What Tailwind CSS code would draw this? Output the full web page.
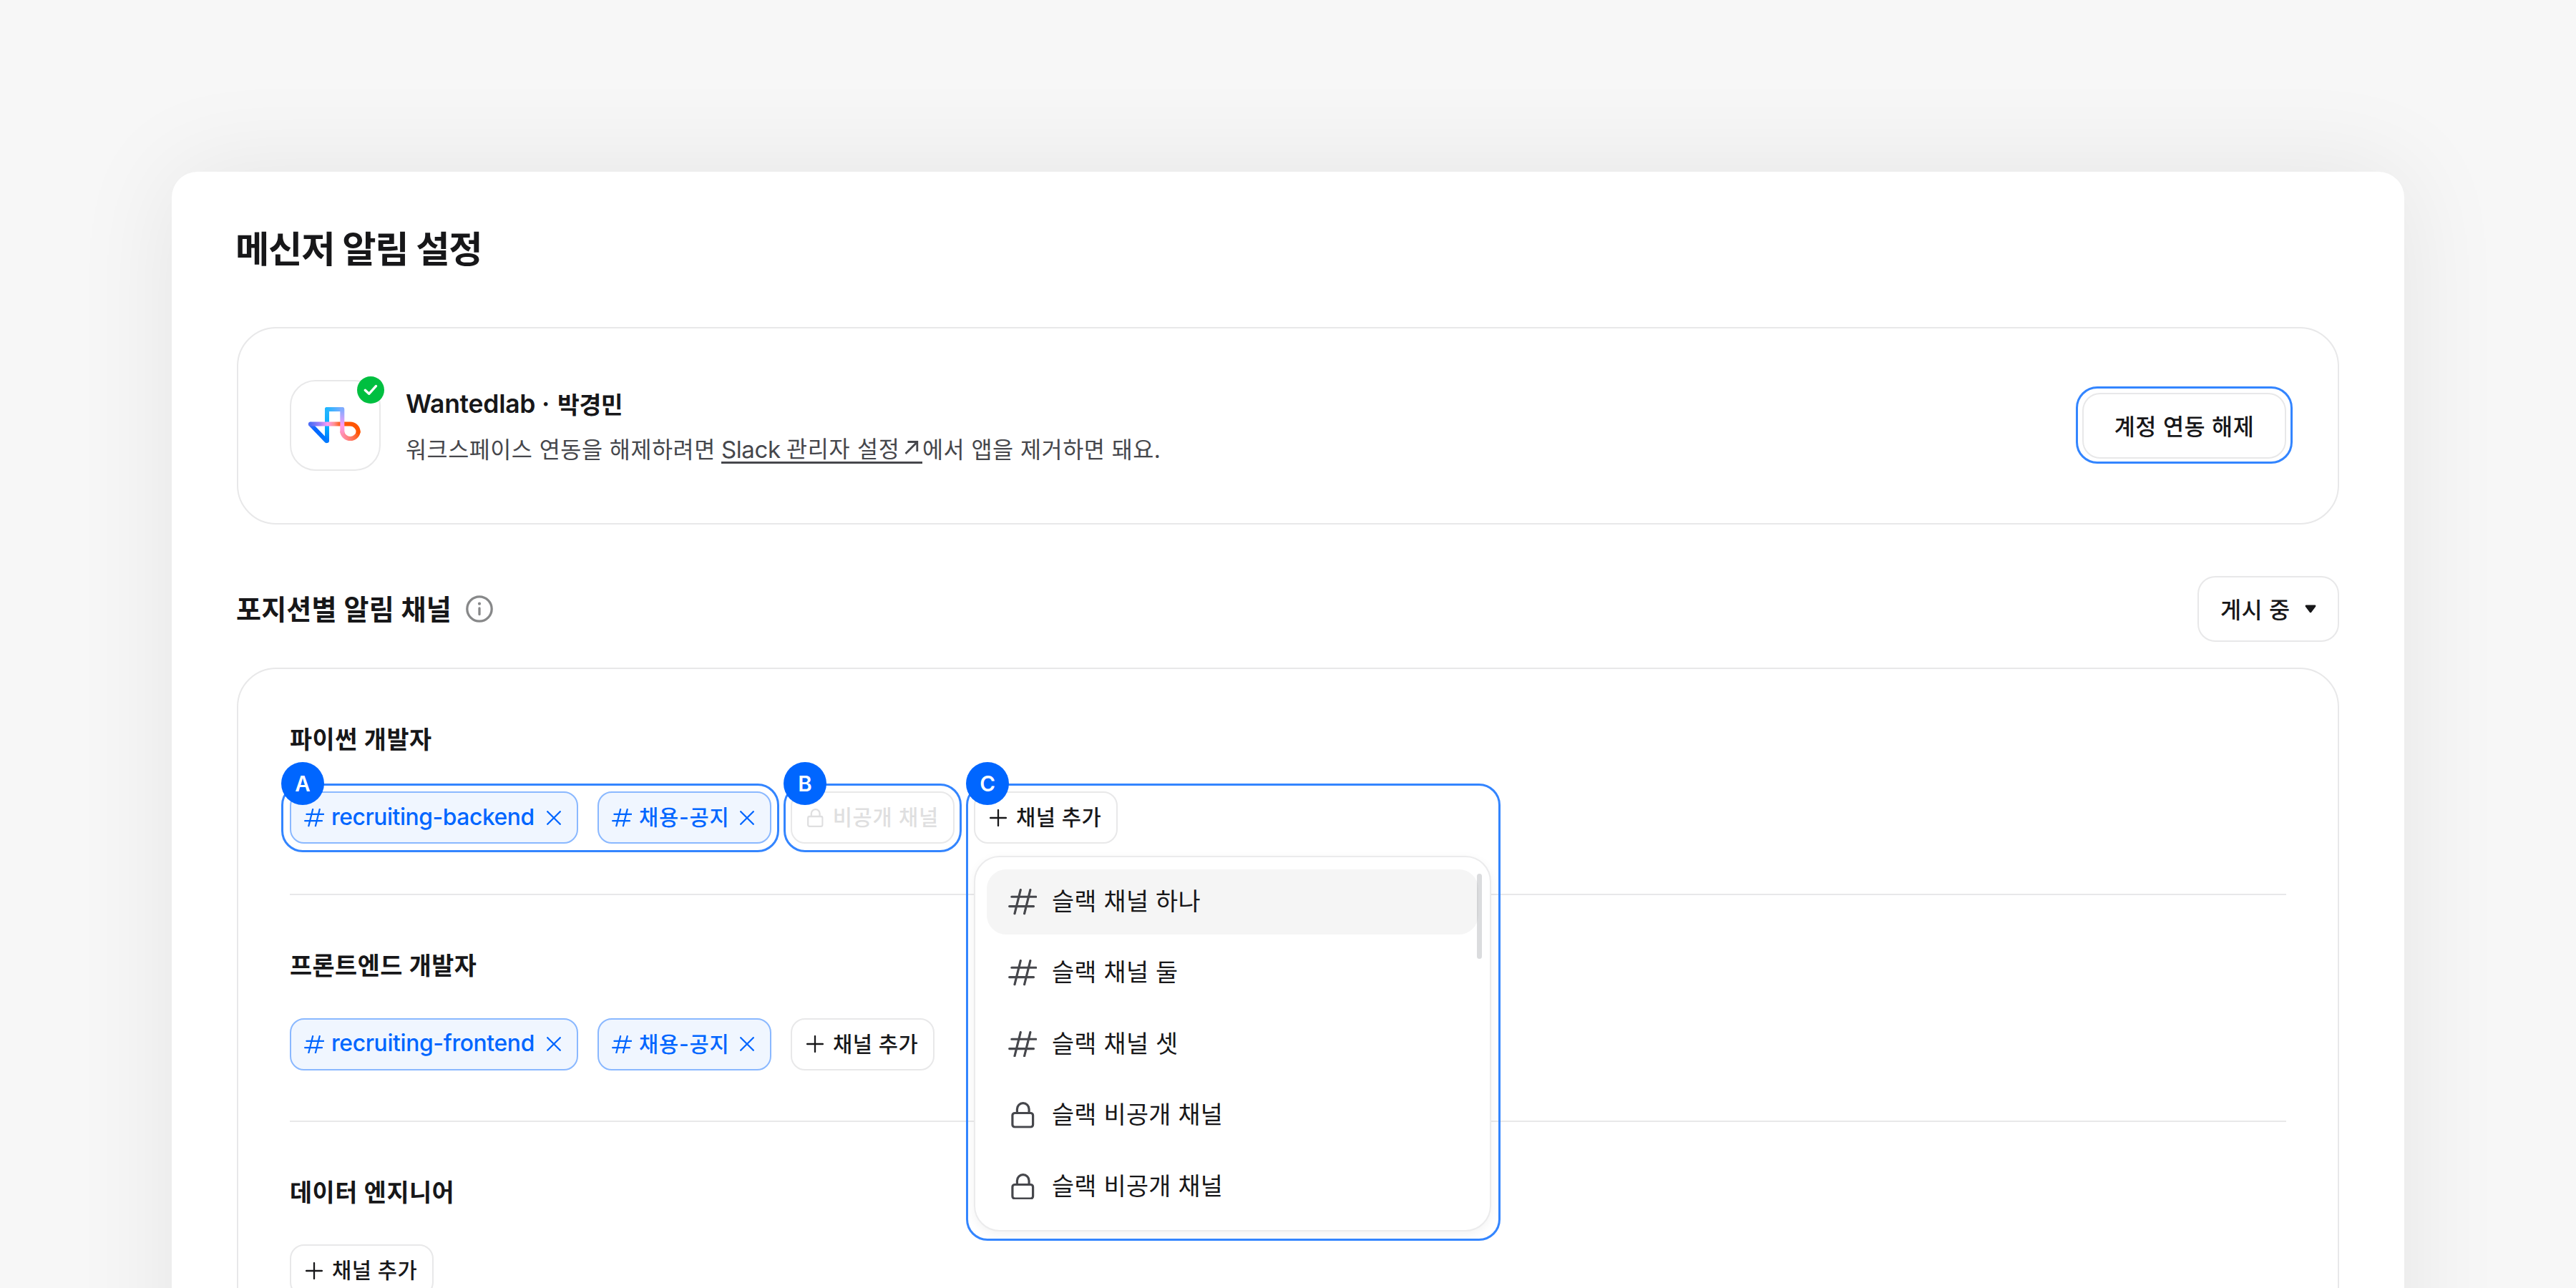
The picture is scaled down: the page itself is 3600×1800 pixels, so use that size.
<!DOCTYPE html>
<html lang="ko">
<head>
  <meta charset="UTF-8" />
  <meta name="viewport" content="width=device-width, initial-scale=1.0" />
  <title>메신저 알림 설정</title>
  <script src="https://cdn.jsdelivr.net/npm/@tailwindcss/browser@4"></script>
</head>
<body class="bg-[#f7f7f7] font-['Inter','Noto_Sans_CJK_KR',sans-serif] text-[#171719]">
  <!-- Shared icons -->
  <svg class="hidden">
    <symbol id="hash" viewBox="57 65 122 109">
      <path d="M71.5 98.5H174M62 138.5H164M109 69.5L84 169.5M150 69.5L125 169.5" fill="none" stroke="currentColor" stroke-width="9.6" stroke-linecap="round" />
    </symbol>
    <symbol id="lock" viewBox="69 960 96 110">
      <rect x="74" y="1006.5" width="86" height="58.5" rx="10" fill="none" stroke="currentColor" stroke-width="9.6" />
      <path d="M93.5 1006V989.8a25 25 0 0 1 50 0V1006" fill="none" stroke="currentColor" stroke-width="9.6" />
    </symbol>
    <symbol id="close" viewBox="0 0 20 20">
      <path d="M1.2 1.2L18.8 18.8M18.8 1.2L1.2 18.8" fill="none" stroke="currentColor" stroke-width="2.3" stroke-linecap="round" />
    </symbol>
    <symbol id="plus" viewBox="0 0 24 24">
      <path d="M12 1.1V22.9M1.1 12H22.9" fill="none" stroke="currentColor" stroke-width="2.3" stroke-linecap="round" />
    </symbol>
  </svg>

  <div class="h-[1800px] w-[3600px] overflow-hidden pt-[240px] pl-[240px]">
    <main class="h-[1800px] w-[3120px] rounded-[36px] bg-white px-[91px] pt-[71px] shadow-[0_0_145px_rgba(0,0,0,0.08)]">
      <h1 class="-ml-[2px] h-[72px] pt-[1px] text-[51.5px] leading-[72px] font-bold tracking-[-1.3px] whitespace-nowrap">메신저 알림 설정</h1>

      <!-- Connected account -->
      <section class="mt-[74px] flex h-[276px] items-center rounded-[55px] border-2 border-[#e8e8e9] px-[72px]">
        <div class="relative -mt-[1px] size-[127px] shrink-0 rounded-[36px] border-2 border-[#e8e8e9]">
          <svg class="absolute -top-[2px] -left-[2px] size-[127px]" viewBox="15 93 381 381" fill="none" stroke-width="18" stroke-linecap="round" stroke-linejoin="round">
            <defs>
              <linearGradient id="g1" gradientUnits="userSpaceOnUse" x1="171" y1="348" x2="171" y2="216">
                <stop offset="0" stop-color="#0078ff" /><stop offset=".45" stop-color="#00aeff" /><stop offset="1" stop-color="#29b6ff" />
              </linearGradient>
              <linearGradient id="g2" gradientUnits="userSpaceOnUse" x1="102" y1="277" x2="168" y2="348">
                <stop offset="0" stop-color="#3f6cf8" /><stop offset=".35" stop-color="#0066ff" /><stop offset="1" stop-color="#007aff" />
              </linearGradient>
              <linearGradient id="g3" gradientUnits="userSpaceOnUse" x1="102" y1="0" x2="240" y2="0">
                <stop offset="0" stop-color="#4f6cf6" /><stop offset=".3" stop-color="#a582f8" /><stop offset=".52" stop-color="#ff9cf2" /><stop offset=".72" stop-color="#ff8f8f" /><stop offset=".9" stop-color="#ff5a14" /><stop offset="1" stop-color="#ff5500" />
              </linearGradient>
              <linearGradient id="g4" gradientUnits="userSpaceOnUse" x1="171" y1="0" x2="235" y2="0">
                <stop offset="0" stop-color="#1fb6ff" /><stop offset="1" stop-color="#7fabff" />
              </linearGradient>
              <linearGradient id="g5" gradientUnits="userSpaceOnUse" x1="0" y1="216" x2="0" y2="320">
                <stop offset="0" stop-color="#7fabff" /><stop offset=".5" stop-color="#dd9ffa" /><stop offset=".65" stop-color="#ff9cf2" /><stop offset="1" stop-color="#ff8fb0" />
              </linearGradient>
              <linearGradient id="g6" gradientUnits="userSpaceOnUse" x1="235" y1="320" x2="302" y2="311">
                <stop offset="0" stop-color="#ff8fb0" /><stop offset=".5" stop-color="#ff7a66" /><stop offset="1" stop-color="#ff5a10" />
              </linearGradient>
            </defs>
            <path d="M171 348V216" stroke="url(#g1)" />
            <path d="M171 216H234" stroke="url(#g4)" />
            <path d="M102 279L168 348" stroke="url(#g2)" />
            <path d="M235 311A34 34 0 0 0 302 311" stroke="url(#g6)" />
            <path d="M102 277.5H268A34 34 0 0 1 302 311" stroke="url(#g3)" />
            <path d="M234.9 216L235 311.1" stroke="url(#g5)" />
          </svg>
          <svg class="absolute -top-[7px] left-[92px] size-[38px]" viewBox="0 0 38 38">
            <circle cx="19" cy="19" r="19" fill="#00bf40" />
            <path d="M11.3 19.3L16.7 24.3L26.4 13.6" fill="none" stroke="#fff" stroke-width="3.4" stroke-linecap="round" stroke-linejoin="round" />
          </svg>
        </div>
        <div class="mt-[3px] ml-[35px] whitespace-nowrap">
          <div class="flex h-[64px] items-center text-[35.5px] leading-[64px] font-semibold">
            <span class="w-[212px] tracking-[-0.25px]">Wantedlab ·</span>
            <span class="mt-[2px] text-[33.5px] tracking-[-0.4px]">박경민</span>
          </div>
          <div class="flex h-[64px] items-center text-[31.6px] leading-[36px] tracking-[0.5px] text-[#46474c]">
            <span class="w-[441px]">워크스페이스 연동을 해제하려면</span>
            <a class="flex h-[38px] w-[281px] items-center border-b-3 border-[#46474c] pt-[2px]">
              <span class="w-[91px] text-[33px] tracking-[-0.4px]">Slack</span>
              <span class="tracking-[0.7px]">관리자 설정</span>
              <svg class="-mt-[2px] ml-auto size-[30px]" viewBox="0 0 30 30">
                <path d="M6.5 22L22.5 6M9.5 5.5H22.8V19" fill="none" stroke="currentColor" stroke-width="2.8" />
              </svg>
            </a>
            <span>에서 앱을 제거하면 돼요.</span>
          </div>
        </div>
        <div class="relative ml-auto">
          <button class="flex h-[92px] w-[285px] items-center justify-center rounded-[25px] border-2 border-[#e8e8e9] pt-[4px] text-[31.6px] font-medium tracking-[0.55px] whitespace-nowrap">계정 연동 해제</button>
          <div class="absolute -inset-x-[9px] -top-[9px] -bottom-[7px] rounded-[30px] border-3 border-[#3385ff]"></div>
        </div>
      </section>

      <!-- Section header -->
      <div class="mt-[72px] flex h-[92px] items-center whitespace-nowrap">
        <h2 class="-ml-[1px] w-[321px] pt-[1px] text-[38.1px] leading-[48px] font-semibold tracking-[0.15px]">포지션별 알림 채널</h2>
        <svg class="size-[38px] text-[#878889]" viewBox="0 0 38 38" fill="none" stroke="currentColor" stroke-width="3.3">
          <circle cx="19" cy="19" r="17.2" />
          <path d="M19 18V26.5" stroke-linecap="round" />
          <circle cx="19" cy="11.7" r="2.1" fill="currentColor" stroke="none" />
        </svg>
        <button class="ml-auto flex h-[92px] w-[198px] items-center rounded-[25px] border-2 border-[#e8e8e9] pr-[30px] pl-[30px] text-[31.6px] font-medium tracking-[0.5px]">
          <span class="pt-[4px]">게시 중</span>
          <svg class="ml-auto h-[12px] w-[16px]" viewBox="0 0 16 12">
            <path d="M2 1.8H14L8 9.8Z" fill="currentColor" stroke="currentColor" stroke-width="2.8" stroke-linejoin="round" />
          </svg>
        </button>
      </div>

      <!-- Positions -->
      <section class="mt-[36px] h-[1000px] rounded-[55px] border-2 border-[#e8e8e9] px-[72px] pt-[74px] whitespace-nowrap">
        <h3 class="h-[48.4px] pt-[1px] text-[33.8px] leading-[48px] font-semibold tracking-[0.5px]">파이썬 개발자</h3>
        <div class="relative mt-[49px] flex h-[73px] gap-[27px]">
          <div class="flex w-[403px] items-center rounded-[20px] border-2 border-[#8ab8ff] bg-[#f0f6ff] pr-[22.5px] pl-[17.5px] text-[#0066ff]">
            <svg class="h-[25.5px] w-[28.5px]"><use href="#hash" /></svg>
            <span class="-mt-[2px] ml-[10px] text-[31.8px] font-medium tracking-[-0.43px]">recruiting-backend</span>
            <svg class="ml-auto size-[20px]"><use href="#close" /></svg>
          </div>
          <div class="flex w-[243px] items-center rounded-[20px] border-2 border-[#8ab8ff] bg-[#f0f6ff] pr-[22px] pl-[17.5px] text-[#0066ff]">
            <svg class="h-[25.5px] w-[28.5px]"><use href="#hash" /></svg>
            <span class="-mt-[1px] ml-[10px] text-[29.6px] font-medium tracking-[0.8px]">채용-공지</span>
            <svg class="ml-auto size-[20px]"><use href="#close" /></svg>
          </div>
          <div class="flex w-[229px] items-center rounded-[20px] border-2 border-[#e8e8e9] bg-white pl-[21px] text-[#dfdfe0]">
            <svg class="h-[26px] w-[22.7px]"><use href="#lock" /></svg>
            <span class="-mt-[1px] ml-[13px] text-[29.6px] font-medium tracking-[0.7px]">비공개 채널</span>
          </div>
          <div class="flex w-[201px] items-center rounded-[20px] border-2 border-[#e8e8e9] bg-white pl-[20px]">
            <svg class="size-[24px]"><use href="#plus" /></svg>
            <span class="-mt-[1px] ml-[13px] text-[29.6px] font-medium tracking-[0.5px]">채널 추가</span>
          </div>

          <!-- Channel dropdown -->
          <div class="absolute top-[90px] left-[956px] z-10 flex h-[525px] w-[723px] flex-col gap-[8.4px] rounded-[36px] border-2 border-[#ebebec] bg-white p-[16.4px] text-[33.8px] tracking-[0.3px] shadow-[0_4px_14px_rgba(0,0,0,0.05)]">
            <div class="flex h-[91px] shrink-0 items-center gap-[20.5px] rounded-[27px] bg-[#f5f5f5] pl-[29.5px]">
              <svg class="h-[36.5px] w-[40.5px] text-[#46474c]"><use href="#hash" /></svg>
              <span>슬랙 채널 하나</span>
            </div>
            <div class="flex h-[91px] shrink-0 items-center gap-[20.5px] pl-[29.5px]">
              <svg class="h-[36.5px] w-[40.5px] text-[#46474c]"><use href="#hash" /></svg>
              <span>슬랙 채널 둘</span>
            </div>
            <div class="flex h-[91px] shrink-0 items-center gap-[20.5px] pl-[29.5px]">
              <svg class="h-[36.5px] w-[40.5px] text-[#46474c]"><use href="#hash" /></svg>
              <span>슬랙 채널 셋</span>
            </div>
            <div class="flex h-[91px] shrink-0 items-center gap-[20.5px] pl-[29.5px]">
              <svg class="h-[36.7px] w-[40.5px] text-[#46474c]"><use href="#lock" /></svg>
              <span>슬랙 비공개 채널</span>
            </div>
            <div class="flex h-[91px] shrink-0 items-center gap-[20.5px] pl-[29.5px]">
              <svg class="h-[36.7px] w-[40.5px] text-[#46474c]"><use href="#lock" /></svg>
              <span>슬랙 비공개 채널</span>
            </div>
            <div class="absolute top-[23px] right-[11px] h-[119px] w-[7px] rounded-full bg-[#70737c]/25"></div>
          </div>

          <!-- Callouts -->
          <div class="absolute -top-[11px] -left-[12px] z-20 h-[96px] w-[696px] rounded-[30px] border-3 border-[#3385ff]"></div>
          <div class="absolute -top-[11px] left-[690px] z-20 h-[96px] w-[249px] rounded-[30px] border-3 border-[#3385ff]"></div>
          <div class="absolute -top-[11px] left-[945px] z-20 h-[639px] w-[747px] rounded-[30px] border-3 border-[#3385ff]"></div>
          <div class="absolute -top-[41px] -left-[12px] z-20 flex size-[60px] items-center justify-center rounded-full bg-[#0066ff] text-[29.5px] font-semibold text-white">A</div>
          <div class="absolute -top-[41px] left-[690px] z-20 flex size-[60px] items-center justify-center rounded-full bg-[#0066ff] text-[29.5px] font-semibold text-white">B</div>
          <div class="absolute -top-[41px] left-[945px] z-20 flex size-[60px] items-center justify-center rounded-full bg-[#0066ff] text-[29.5px] font-semibold text-white">C</div>
        </div>

        <hr class="mt-[70px] mb-[74px] border-t-2 border-[#e8e8e9]" />

        <h3 class="h-[48.4px] pt-[1px] text-[33.8px] leading-[48px] font-semibold tracking-[0.45px]">프론트엔드 개발자</h3>
        <div class="mt-[49px] flex h-[73px] gap-[27px]">
          <div class="flex w-[403px] items-center rounded-[20px] border-2 border-[#8ab8ff] bg-[#f0f6ff] pr-[22.5px] pl-[17.5px] text-[#0066ff]">
            <svg class="h-[25.5px] w-[28.5px]"><use href="#hash" /></svg>
            <span class="-mt-[2px] ml-[10px] text-[31.8px] font-medium tracking-[-0.35px]">recruiting-frontend</span>
            <svg class="ml-auto size-[20px]"><use href="#close" /></svg>
          </div>
          <div class="flex w-[243px] items-center rounded-[20px] border-2 border-[#8ab8ff] bg-[#f0f6ff] pr-[22px] pl-[17.5px] text-[#0066ff]">
            <svg class="h-[25.5px] w-[28.5px]"><use href="#hash" /></svg>
            <span class="-mt-[1px] ml-[10px] text-[29.6px] font-medium tracking-[0.8px]">채용-공지</span>
            <svg class="ml-auto size-[20px]"><use href="#close" /></svg>
          </div>
          <div class="flex w-[201px] items-center rounded-[20px] border-2 border-[#e8e8e9] bg-white pl-[20px]">
            <svg class="size-[24px]"><use href="#plus" /></svg>
            <span class="-mt-[1px] ml-[13px] text-[29.6px] font-medium tracking-[0.5px]">채널 추가</span>
          </div>
        </div>

        <hr class="mt-[70px] mb-[74px] border-t-2 border-[#e8e8e9]" />

        <h3 class="h-[48.4px] pt-[1px] text-[33.8px] leading-[48px] font-semibold tracking-[0.5px]">데이터 엔지니어</h3>
        <div class="mt-[49px] flex h-[73px]">
          <div class="flex w-[201px] items-center rounded-[20px] border-2 border-[#e8e8e9] bg-white pl-[20px]">
            <svg class="size-[24px]"><use href="#plus" /></svg>
            <span class="-mt-[1px] ml-[13px] text-[29.6px] font-medium tracking-[0.5px]">채널 추가</span>
          </div>
        </div>
      </section>
    </main>
  </div>
</body>
</html>
